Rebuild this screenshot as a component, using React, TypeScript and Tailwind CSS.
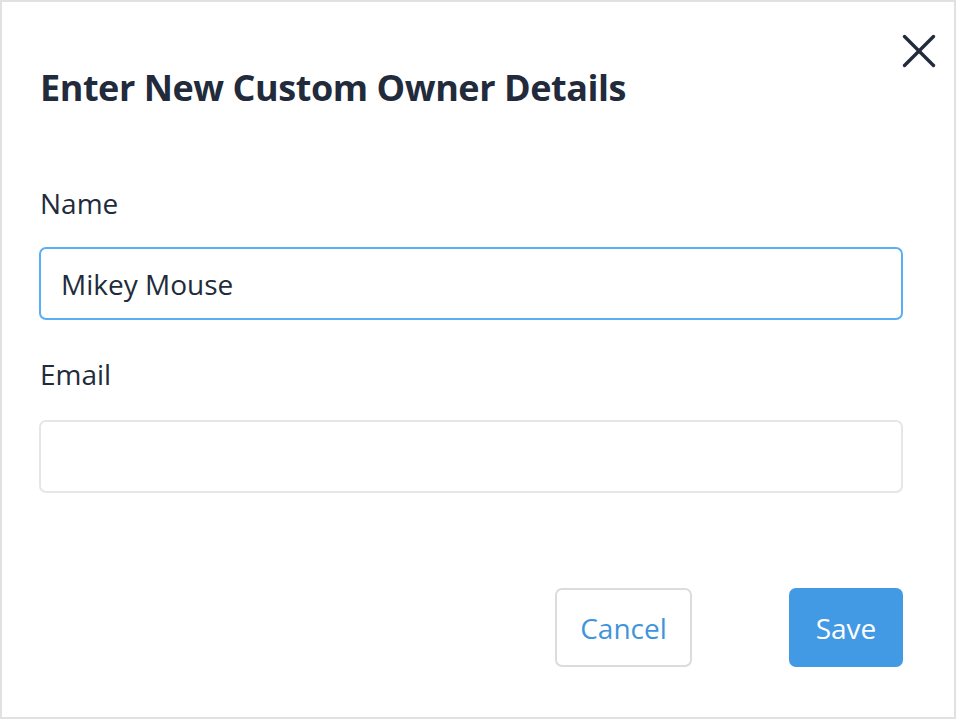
import React from 'react';

// Close glyph drawn as two strokes, matches the thin dark X in the corner
const CloseIcon = () => (
  <svg width="34" height="34" viewBox="0 0 34 34" fill="none" stroke="currentColor" strokeWidth="3.4" strokeLinecap="round">
    <path d="M2.5 2.5 31.5 31.5" />
    <path d="M31.5 2.5 2.5 31.5" />
  </svg>
);

export default function App() {
  return (
    <div className="w-[956px] h-[719px] bg-white" style={{ fontFamily: '"Open Sans", "Noto Sans", sans-serif' }}>
      <div className="relative w-full h-full border-2 border-[#e1e1e1] pl-[38px] pt-[64px] text-[#222b3b]">
        <button className="absolute top-[32px] right-[18px] text-[#222b3b]">
          <CloseIcon />
        </button>

        <h1 className="text-[36px] leading-[44px] font-bold tracking-[-0.45px]">Enter New Custom Owner Details</h1>

        <label className="block mt-[75px] text-[28px] leading-[36px]">Name</label>
        <div className="mt-[26px] -ml-px w-[864px] h-[73px] rounded-[7px] border-2 border-[#5aaef4] flex items-center pl-[20px] text-[28px]">
          Mikey Mouse
        </div>

        <label className="block mt-[36px] text-[28px] leading-[36px]">Email</label>
        <div className="mt-[28px] -ml-px w-[864px] h-[73px] rounded-[7px] border-2 border-[#e6e6e6]" />

        <div className="mt-[95px] -ml-px w-[864px] flex justify-end gap-[97px]">
          <button className="w-[137px] h-[79px] rounded-[7px] border-2 border-[#dcdcdc] text-[#3f95dc] text-[28px]">
            Cancel
          </button>
          <button className="w-[114px] h-[79px] rounded-[7px] bg-[#4299e4] text-white text-[28px]">
            Save
          </button>
        </div>
      </div>
    </div>
  );
}
